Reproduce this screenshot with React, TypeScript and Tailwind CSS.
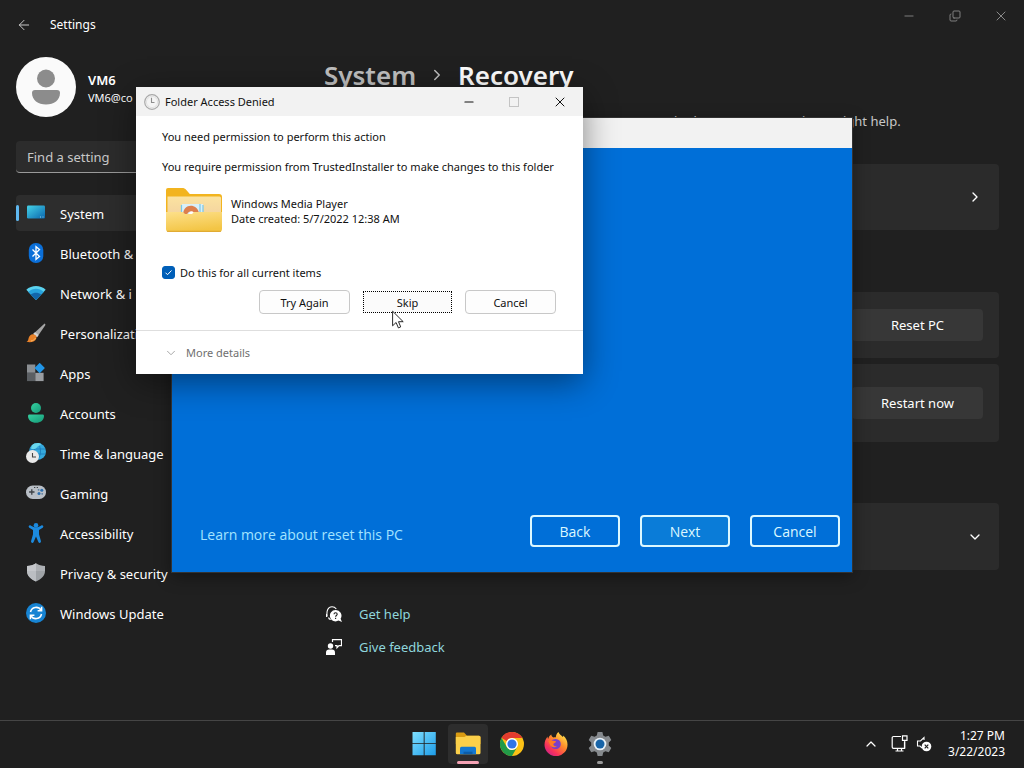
import type { ReactNode } from 'react';
import { ArrowLeft, ChevronDown, ChevronRight, ChevronUp, Copy, Minus, X } from 'lucide-react';

const SystemIcon = () => (
  <svg viewBox="0 0 20 20" className="w-5 h-5">
    <defs>
      <linearGradient id="sys" x1="0" y1="0" x2="1" y2="1">
        <stop offset="0" stopColor="#45d3e8" />
        <stop offset="1" stopColor="#0a66ad" />
      </linearGradient>
    </defs>
    <rect x="1" y="2.500" width="18" height="13" rx="1.200" fill="url(#sys)" />
    <path d="M14 14h1M16.500 14h1" stroke="#bfe9f5" strokeWidth="0.800" />
  </svg>
);

const BluetoothIcon = () => (
  <svg viewBox="0 0 20 20" className="w-5 h-5">
    <rect x="2.800" y="0" width="14.500" height="20" rx="7" fill="#0b6fd8" />
    <path d="M6.500 6.500l7 7L10 16.300V3.700l3.500 2.800-7 7" fill="none" stroke="#fff" strokeWidth="1.300" />
  </svg>
);

const NetworkIcon = () => (
  <svg viewBox="0 0 20 20" className="w-5 h-5">
    <path d="M0.300 6.800C5.500 1.800 14.500 1.800 19.700 6.800L10 17z" fill="#5bd2ee" />
    <path d="M2.300 9C7 4.800 13 4.800 17.700 9L10 17z" fill="#27a3de" />
    <path d="M4.800 11.600C8 9 12 9 15.200 11.600L10 17z" fill="#1266ab" />
  </svg>
);

const BrushIcon = () => (
  <svg viewBox="0 0 20 20" className="w-5 h-5">
    <path d="M18.600 0.600c1 .4.9 1.300.5 2L11 14.200 7.200 11z" fill="#a5a5a5" />
    <path d="M9 9.200l3.600 2.900L11 14.200 7.200 11z" fill="#d3d3d3" />
    <path d="M7 11.200c2.600.2 4 2 3.400 4C9.600 18.600 5 20 0.500 18.800c2-1 1.700-2.300 2.300-4.300.7-2.100 2.300-3.400 4.200-3.300z" fill="#e8822a" />
    <path d="M5 18c2-.4 3.700-1.400 4.600-3" fill="none" stroke="#f9b866" strokeWidth="1" />
  </svg>
);

const AppsIcon = () => (
  <svg viewBox="0 0 20 20" className="w-5 h-5">
    <rect x="1" y="1.500" width="8.300" height="8.300" fill="#8b8f93" />
    <rect x="1" y="9.800" width="8.300" height="8.300" fill="#5b5f63" />
    <rect x="9.300" y="9.800" width="8.300" height="8.300" fill="#9a9da1" />
    <path d="M13.700-.2l5.200 5.200-5.200 5.200L8.500 5z" fill="#2196e8" />
  </svg>
);

const AccountsIcon = () => (
  <svg viewBox="0 0 20 20" className="w-5 h-5">
    <defs>
      <linearGradient id="acc" x1="0" y1="0" x2="1" y2="1">
        <stop offset="0" stopColor="#35d0a0" />
        <stop offset="1" stopColor="#159a78" />
      </linearGradient>
    </defs>
    <circle cx="10" cy="5" r="5" fill="url(#acc)" />
    <path d="M3.500 11.500h13c1 0 1.500.6 1.500 1.500 0 4-3.500 6.800-8 6.800S2 17 2 13c0-.9.5-1.500 1.500-1.500z" fill="url(#acc)" />
  </svg>
);

const TimeIcon = () => (
  <svg viewBox="0 0 20 20" className="w-5 h-5">
    <circle cx="11.500" cy="8.500" r="8.500" fill="#35a9dd" />
    <path d="M4 6h15M4 11h15M11.500 0c-4 4-4 12 0 17M11.500 0c4 4 4 12 0 17" fill="none" stroke="#1674b4" strokeWidth="0.700" />
    <path d="M6 2.200c2-2 7-3 9-1-1 2-3 1-4 3s-4 2-6 1.500z" fill="#6ad8ee" />
    <circle cx="6.500" cy="13.500" r="6.500" fill="#e9e9e9" />
    <path d="M6.500 10v4H10" fill="none" stroke="#444" strokeWidth="1.100" />
  </svg>
);

const GamingIcon = () => (
  <svg viewBox="0 0 20 20" className="w-5 h-5">
    <rect x="0" y="2.500" width="20" height="13.500" rx="6.700" fill="#b9bfc6" />
    <path d="M5.800 6.300v5.400M3.100 9h5.400" stroke="#3c4146" strokeWidth="1.300" />
    <circle cx="15.800" cy="7.200" r="1.500" fill="#2d6fae" />
    <circle cx="13" cy="10.500" r="1.500" fill="#2d6fae" />
    <circle cx="12.600" cy="6.800" r="0.900" fill="#5b7ea0" />
    <circle cx="16.200" cy="10.800" r="0.900" fill="#5b7ea0" />
    <path d="M8 4.500h1.300M10.700 4.500H12" stroke="#3c4146" strokeWidth="1" />
  </svg>
);

const AccessibilityIcon = () => (
  <svg viewBox="0 0 20 20" className="w-5 h-5">
    <circle cx="10" cy="2.300" r="2.300" fill="#1c8be0" />
    <path d="M2.800 3c.4-.7 1.200-.9 1.900-.5 3.400 2.400 7.200 2.400 10.600 0 .7-.4 1.500-.2 1.900.5.3.7.1 1.300-.5 1.700L13 6.900v4.400l1.900 6.800c.4 1.800-1.800 2.500-2.500.9L10 13.500 7.600 19c-.7 1.600-2.900.9-2.500-.9L7 11.300V6.900L3.300 4.700c-.6-.4-.8-1-.5-1.700z" fill="#1c8be0" />
  </svg>
);

const ShieldIcon = () => (
  <svg viewBox="0 0 20 20" className="w-5 h-5">
    <path d="M10 0.300c2.800 1.900 5.500 2.500 9 2.600v5.200c0 4.800-3.400 8-9 10.400-5.600-2.400-9-5.600-9-10.400V2.900c3.500-.1 6.200-.7 9-2.600z" fill="#9fa3a7" />
    <path d="M10 0.300c-2.800 1.900-5.500 2.500-9 2.600v5.200c0 4.800 3.400 8 9 10.400z" fill="#bbbec2" />
    <path d="M10 0.300c2.800 1.900 5.500 2.500 9 2.600v5.200H1V2.900c3.500-.1 6.200-.7 9-2.600z" fill="#fff" opacity="0.150" />
  </svg>
);

const UpdateIcon = () => (
  <svg viewBox="0 0 20 20" className="w-5 h-5">
    <circle cx="10" cy="10" r="10" fill="#1784d3" />
    <path d="M4.500 9A5.700 5.700 0 0 1 15 7.200M15.500 11A5.700 5.700 0 0 1 5 12.800" fill="none" stroke="#fff" strokeWidth="1.500" />
    <path d="M15.600 3.800v4h-4M4.400 16.200v-4h4" fill="none" stroke="#fff" strokeWidth="1.500" />
  </svg>
);

const ClockIcon = () => (
  <svg viewBox="0 0 16 16" className="w-4 h-4">
    <circle cx="8" cy="8" r="7.300" fill="#f4f4f4" stroke="#a8a8a8" strokeWidth="1.200" />
    <circle cx="8" cy="8" r="5.600" fill="none" stroke="#dcdcdc" strokeWidth="0.800" />
    <path d="M7.500 3.800v4.700h3" fill="none" stroke="#8d8d8d" strokeWidth="1.100" />
  </svg>
);

const FolderIcon = () => (
  <svg viewBox="0 0 58 46" className="w-[58px] h-[46px]">
    <defs>
      <linearGradient id="inner" x1="0" y1="0" x2="0" y2="1">
        <stop offset="0" stopColor="#fbe3a0" />
        <stop offset="1" stopColor="#f3d3a0" />
      </linearGradient>
      <linearGradient id="front" x1="0" y1="0" x2="0.300" y2="1">
        <stop offset="0" stopColor="#fde08a" />
        <stop offset="1" stopColor="#f3c545" />
      </linearGradient>
    </defs>
    <path d="M3 1h14c2 0 3 .6 4.300 2l3.500 4H54a3 3 0 0 1 3 3v32H1V3a2 2 0 0 1 2-2z" fill="#f2b41f" />
    <path d="M2.500 9.500h52a1.500 1.500 0 0 1 1.500 1.500v18H2.500z" fill="url(#inner)" />
    <path d="M17 17h21v10H17z" fill="#d9eff8" />
    <path d="M35 17v8M38 18v7M16.500 18v8" stroke="#79c7e8" strokeWidth="1.200" />
    <path d="M18 28c0-12 14-12 16-2l-5 2c-2-5-6-4-7 0z" fill="#dd7f4d" />
    <path d="M24 28c0-5 5-5 6 0z" fill="#fff" />
    <path d="M1 25h17l2 2h7l2-2h28v17a3 3 0 0 1-3 3H4a3 3 0 0 1-3-3z" fill="url(#front)" />
    <path d="M2 44.300h54" stroke="#d9a02b" strokeWidth="0.900" />
  </svg>
);

const HelpIcon = () => (
  <svg viewBox="0 0 16 16" className="w-4 h-4">
    <path d="M1.200 10.500C.2 5 2 .8 6 .8c2 0 3.300.8 4.300 2.200M0.500 8v3M2.500 11.500c.3 1.200 1 1.800 2.300 2" fill="none" stroke="#fff" strokeWidth="1.100" />
    <path d="M9.500 4a5.700 5.700 0 1 0 3 10.600l3.500 1.400-1.400-3.300A5.700 5.700 0 0 0 9.500 4z" fill="#fff" />
    <path d="M8 8.300c0-2 3.200-2 3.200 0 0 1.200-1.600 1.200-1.600 2.500M9.600 11.800v1.100" fill="none" stroke="#202020" strokeWidth="1.100" />
  </svg>
);

const FeedbackIcon = () => (
  <svg viewBox="0 0 16 16" className="w-4 h-4">
    <circle cx="4.500" cy="7" r="2.700" fill="#fff" />
    <path d="M0 16v-2.500c0-2 1.200-3 3-3h3c1.800 0 3 1 3 3V16z" fill="#fff" />
    <path d="M6.500 3V.7h9v6h-2.500l-2 2v-2H9" fill="none" stroke="#fff" strokeWidth="1.200" />
  </svg>
);

const WindowsLogo = () => (
  <svg viewBox="0 0 24 24" className="w-6 h-6">
    <defs>
      <linearGradient id="win" gradientUnits="userSpaceOnUse" x1="0" y1="0" x2="24" y2="24">
        <stop offset="0" stopColor="#7fe0ff" />
        <stop offset="1" stopColor="#1b9be8" />
      </linearGradient>
    </defs>
    <path d="M.5 0h11.200v11.200H.5zM12.600 0h11.200v11.200H12.600zM.5 12.100h11.200v11.200H.5zM12.600 12.100h11.200v11.200H12.600z" fill="url(#win)" />
  </svg>
);

const ExplorerIcon = () => (
  <svg viewBox="0 0 26 24" className="w-[26px] h-6">
    <path d="M2 .5h7l3 3.200h12a1.500 1.500 0 0 1 1.500 1.500V12H.8V1.700A1.200 1.200 0 0 1 2 .5z" fill="#d99b12" />
    <path d="M.8 5h8.500l2.300-1.300h12.400a1.500 1.500 0 0 1 1.500 1.500v15.500a1.500 1.500 0 0 1-1.500 1.500H2.300a1.500 1.500 0 0 1-1.500-1.500z" fill="#fbd04a" />
    <path d="M5 22.200v-6a1.500 1.500 0 0 1 1.500-1.500h13a1.500 1.500 0 0 1 1.500 1.500v6z" fill="#1478d0" />
    <path d="M8.500 22.200v-2.500h9v2.500z" fill="#0c5da8" />
  </svg>
);

const ChromeLogo = () => (
  <svg viewBox="0 0 24 24" className="w-6 h-6">
    <circle cx="12" cy="12" r="12" fill="#fbc116" />
    <path d="M1.600 6A12 12 0 0 1 22.400 6H12a6 6 0 0 0-5.200 3z" fill="#e33b2e" />
    <path d="M1.600 6A12 12 0 0 0 12 24l5.200-9a6 6 0 0 1-10.400 0z" fill="#229a48" />
    <circle cx="12" cy="12" r="6" fill="#fff" />
    <circle cx="12" cy="12" r="4.600" fill="#2f74e8" />
  </svg>
);

const FirefoxLogo = () => (
  <svg viewBox="0 0 24 24" className="w-6 h-6">
    <defs>
      <linearGradient id="fox" x1="0.850" y1="0.100" x2="0.200" y2="0.900">
        <stop offset="0" stopColor="#ffe14a" />
        <stop offset="0.400" stopColor="#ff8a2a" />
        <stop offset="0.800" stopColor="#f9325a" />
        <stop offset="1" stopColor="#d5267f" />
      </linearGradient>
    </defs>
    <path d="M14.500 0c.6 2.300 2.800 3.300 4.300 5 .6-.2.500-1 .4-1.600 3 2.400 4.300 5.600 4.300 9A11.500 11.500 0 0 1 .5 13c0-3.600 1.200-6 3-8.500 0 1.100.2 1.800.8 2.300C4.800 4.800 6 3.300 7.300 2.600c0 1.500.9 2.500 2.200 2.800 2-.1 2-.1 2.300.2C11.800 3.400 12.800 1.200 14.500 0z" fill="url(#fox)" />
    <path d="M7 9.500c2.300-3.500 7.500-3 9.300.2 1.600 4.100-1 7.300-4.500 7.300-3.100 0-5.300-2.200-5.300-4.800z" fill="#7a40c8" />
    <path d="M4.300 9c1.700-1.200 3.500-.6 5-.2 1.500.2 2.700.2 2.700.9 0 1-1.800 1-2.600 2.300-.5 1.500 1.600 2.800 3.600 2-1.300 2-6.500 1.800-7.300-1.900z" fill="#ff7a25" />
  </svg>
);

const SettingsGear = () => (
  <svg viewBox="0 0 24 24" className="w-6 h-6">
    <path
      d="M9.600 0h4.800l.8 3.500 2.200 1.200 3.400-1 2.500 4.200-2.500 2.500v3.200l2.500 2.500-2.500 4.200-3.400-1-2.200 1.200-.8 3.500H9.600l-.8-3.500-2.200-1.200-3.400 1L.7 16.100l2.500-2.500v-3.200L.7 7.900l2.500-4.200 3.400 1 2.200-1.200z"
      fill="#85898d"
    />
    <circle cx="12" cy="12" r="6.300" fill="#e8f1f8" />
    <circle cx="12" cy="12" r="4.500" fill="#1764a8" />
  </svg>
);

const MonitorIcon = () => (
  <svg viewBox="0 0 17 17" className="w-[17px] h-[17px]" fill="none" stroke="#fff" strokeWidth="1.200">
    <path d="M10 1.500H2.500a1.300 1.300 0 0 0-1.300 1.300V12c0 .7.600 1.300 1.300 1.300h11V7M4.500 16h8M6.500 13.500V16M10.500 13.500V16" />
    <path d="M11.500.8h4.500v4.500h-4.500zM13.700 5.500v8" />
  </svg>
);

const MutedIcon = () => (
  <svg viewBox="0 0 16 16" className="w-4 h-4">
    <path d="M8 4V1.500L4.500 5h-3v5H4l2 2" fill="none" stroke="#fff" strokeWidth="1.100" />
    <circle cx="10.500" cy="10.500" r="4.800" fill="#fff" />
    <path d="M8.700 8.700l3.600 3.600M12.300 8.700l-3.600 3.600" stroke="#202020" strokeWidth="1.200" />
  </svg>
);

const navItems = [
  { Icon: SystemIcon, label: 'System' },
  { Icon: BluetoothIcon, label: 'Bluetooth &' },
  { Icon: NetworkIcon, label: 'Network & i' },
  { Icon: BrushIcon, label: 'Personalizati' },
  { Icon: AppsIcon, label: 'Apps' },
  { Icon: AccountsIcon, label: 'Accounts' },
  { Icon: TimeIcon, label: 'Time & language' },
  { Icon: GamingIcon, label: 'Gaming' },
  { Icon: AccessibilityIcon, label: 'Accessibility' },
  { Icon: ShieldIcon, label: 'Privacy & security' },
  { Icon: UpdateIcon, label: 'Windows Update' },
];

const taskbarApps = [
  { Icon: WindowsLogo, name: 'Start' },
  { Icon: ExplorerIcon, name: 'File Explorer', active: true },
  { Icon: ChromeLogo, name: 'Google Chrome' },
  { Icon: FirefoxLogo, name: 'Firefox' },
  { Icon: SettingsGear, name: 'Settings', open: true },
];

const Card = ({ className, children }: { className: string; children: ReactNode }) => (
  <div className={`flex items-center justify-end px-4 rounded bg-[#2b2b2b] ${className}`}>{children}</div>
);

const Sidebar = () => (
  <aside className="w-[292px] shrink-0 pl-4">
    <div className="flex items-center gap-3 pt-2">
      <svg viewBox="0 0 60 60" className="w-[60px] h-[60px]">
        <circle cx="30" cy="30" r="30" fill="#fafafa" />
        <circle cx="30" cy="21.500" r="9" fill="#8c8c8c" />
        <path d="M19 33h22c2 0 3 1.200 3 3 0 7-6 11.500-14 11.500S16 43 16 36c0-1.800 1-3 3-3z" fill="#8c8c8c" />
      </svg>
      <div className="pt-0.5 text-white">
        <div className="text-[13px] leading-5 font-semibold">VM6</div>
        <div className="text-[11px] leading-4">VM6@co</div>
      </div>
    </div>
    <input
      type="text"
      aria-label="Find a setting"
      placeholder="Find a setting"
      className="block w-full h-8 mt-6 px-[11px] rounded bg-[#2c2c2c] border-b border-[#9a9a9a] text-[13px] text-white placeholder:text-[#c8c8c8] outline-none"
    />
    <nav className="flex flex-col gap-1 mt-[22px]">
      {navItems.map(({ Icon, label }, index) => (
        <a
          key={label}
          href="#"
          className={`flex items-center h-9 rounded text-[13px] text-white ${index === 0 ? 'bg-[#2d2d2d]' : ''}`}
        >
          <span className={`w-[3px] h-4 rounded-full ${index === 0 ? 'bg-[#5fb8f0]' : ''}`} />
          <span className="ml-[7px] mr-3.5">
            <Icon />
          </span>
          <span className="pt-[3px]">{label}</span>
        </a>
      ))}
    </nav>
  </aside>
);

const Recovery = () => (
  <main className="flex-1 min-w-0 pl-8 pr-[25px] text-[13px] text-white">
    <h1 className="flex items-center gap-3 mt-2 text-[26px] leading-9 font-semibold">
      <span className="text-[#c0c0c0]">System</span>
      <ChevronRight className="w-[18px] h-[18px] text-[#c0c0c0]" />
      <span>Recovery</span>
    </h1>
    <p className="mt-[18px] pl-2.5 leading-5 text-[#c8c8c8]">
      If you're having problems with your PC or want to reset it, these recovery options might help.
    </p>
    <Card className="h-[66px] mt-[33px]">
      <ChevronRight className="w-4 h-4" />
    </Card>
    <Card className="h-[66px] mt-[62px]">
      <button className="w-[131px] h-8 pt-px rounded bg-[#373737]">Reset PC</button>
    </Card>
    <Card className="h-[78px] mt-1.5">
      <button className="w-[131px] h-8 pt-px rounded bg-[#373737]">Restart now</button>
    </Card>
    <Card className="h-[67px] mt-[61px]">
      <ChevronDown className="w-4 h-4" />
    </Card>
    <div className="flex flex-col gap-[13px] mt-[34px] pl-0.5 text-[#8fd6dc]">
      <a href="#" className="flex items-center gap-[17px] leading-5">
        <HelpIcon />
        Get help
      </a>
      <a href="#" className="flex items-center gap-[17px] leading-5">
        <FeedbackIcon />
        Give feedback
      </a>
    </div>
  </main>
);

const SettingsWindow = () => (
  <div className="flex-1 flex flex-col">
    <header className="flex justify-between h-[49px] text-white">
      <div className="flex items-center gap-[18px] pl-4 text-xs">
        <button aria-label="Back">
          <ArrowLeft className="w-4 h-4 text-[#c8c8c8]" strokeWidth={1.5} />
        </button>
        Settings
      </div>
      <div className="flex h-8 text-[#8a8a8a]">
        <button aria-label="Minimize" className="w-[46px] grid place-items-center">
          <Minus className="w-3.5 h-3.5" strokeWidth={1.5} />
        </button>
        <button aria-label="Restore" className="w-[46px] grid place-items-center">
          <Copy className="w-3 h-3 -scale-y-100" strokeWidth={1.8} />
        </button>
        <button aria-label="Close" className="w-[46px] grid place-items-center">
          <X className="w-4 h-4" strokeWidth={1.5} />
        </button>
      </div>
    </header>
    <div className="flex">
      <Sidebar />
      <Recovery />
    </div>
  </div>
);

const ResetWindow = () => (
  <section
    aria-label="Reset this PC"
    className="absolute left-[172px] top-[118px] w-[680px] h-[454px] flex flex-col bg-[#006fd8] font-['Open_Sans',sans-serif] shadow-[0_0_0_1px_#333333,0_4px_16px_rgba(0,0,0,0.4)]"
  >
    <div className="h-[30px] bg-[#f2f2f2]" />
    <div className="flex-1 flex items-end justify-between pl-7 pr-3 pb-[25px] text-sm">
      <a href="#" className="h-8 pt-2 leading-6 text-[#a4e4ff]">
        Learn more about reset this PC
      </a>
      <div className="flex gap-5 text-[#dcf8ff]">
        <button className="w-[90px] h-8 pt-px rounded border-2 border-[#dcf8ff]">Back</button>
        <button className="w-[90px] h-8 pt-px rounded border-2 border-[#dcf8ff] bg-[#0a7cd8]">Next</button>
        <button className="w-[90px] h-8 pt-px rounded border-2 border-[#dcf8ff]">Cancel</button>
      </div>
    </div>
  </section>
);

const AccessDialog = () => (
  <section
    role="dialog"
    aria-label="Folder Access Denied"
    className="absolute left-[136px] top-[87px] w-[447px] h-[287px] flex flex-col bg-white text-[11px] text-[#111] shadow-[0_8px_32px_rgba(0,0,0,0.45)]"
  >
    <div className="flex items-center h-[29px] pl-2 bg-[#f2f2f2]">
      <ClockIcon />
      <span className="flex-1 ml-[5px] pt-0.5">Folder Access Denied</span>
      <button aria-label="Minimize" className="w-[45px] grid place-items-center">
        <Minus className="w-3.5 h-3.5" strokeWidth={1.8} />
      </button>
      <button aria-label="Maximize" disabled className="w-[46px] grid place-items-center">
        <span className="w-2.5 h-2.5 border border-[#c4c4c4]" />
      </button>
      <button aria-label="Close" className="w-[46px] grid place-items-center">
        <X className="w-4 h-4" strokeWidth={1.5} />
      </button>
    </div>
    <div className="pl-[26px] pr-[27px] pt-[13px] leading-[15px]">
      <p className="mb-[15px]">You need permission to perform this action</p>
      <p className="whitespace-nowrap">You require permission from TrustedInstaller to make changes to this folder</p>
      <div className="flex items-center gap-2 mt-[13px] pl-[3px]">
        <FolderIcon />
        <div className="pt-0.5">
          <p>Windows Media Player</p>
          <p>Date created: 5/7/2022 12:38 AM</p>
        </div>
      </div>
      <label className="flex items-center gap-[5px] mt-8">
        <span className="grid">
          <input
            type="checkbox"
            defaultChecked
            className="col-start-1 row-start-1 appearance-none w-[13px] h-[13px] rounded-[3px] border border-[#005fb8] checked:bg-[#005fb8]"
          />
          <svg viewBox="0 0 13 13" className="col-start-1 row-start-1 w-[13px] h-[13px] pointer-events-none">
            <path d="M3.500 6.700l2 2 4-4.200" fill="none" stroke="#fff" strokeWidth="1" />
          </svg>
        </span>
        Do this for all current items
      </label>
      <div className="flex justify-end items-center gap-[13px] mt-2.5">
        <button className="w-[91px] h-6 rounded border border-[#c8c8c8] bg-[#fdfdfd]">Try Again</button>
        <button className="w-[89px] h-[22px] border border-dotted border-black bg-[#fbfbfb]">Skip</button>
        <button className="w-[91px] h-6 rounded border border-[#c8c8c8] bg-[#fdfdfd]">Cancel</button>
      </div>
    </div>
    <div className="flex-1 flex items-center mt-4 pl-7 border-t border-[#dedede]">
      <button className="flex items-center gap-2 pt-px text-[#6f6f6f]">
        <ChevronDown className="w-3.5 h-3.5 text-[#9a9a9a]" strokeWidth={1.5} />
        More details
      </button>
    </div>
  </section>
);

const Cursor = () => (
  <svg viewBox="0 0 12 19" className="absolute left-[392px] top-[310px] w-3 h-[19px]">
    <path d="M.6 1.200v14.600l3.500-3.300 2.300 5.400 2.300-1-2.200-5.200h4.700z" fill="#fff" stroke="#111" strokeWidth="0.900" />
  </svg>
);

const Taskbar = () => (
  <footer className="grid grid-cols-[1fr_auto_1fr] items-center h-12 pb-0.5 border-t border-[#454545] bg-[#1f1f1f] text-white">
    <div />
    <div className="flex gap-1">
      {taskbarApps.map(({ Icon, name, active, open }) => (
        <button
          key={name}
          aria-label={name}
          className={`relative w-10 h-10 grid place-items-center rounded ${active ? 'bg-[#2d2d2d]' : ''}`}
        >
          <Icon />
          {active && <span className="absolute bottom-0 w-[22px] h-[3px] rounded-full bg-[#f5a3b5]" />}
          {open && <span className="absolute bottom-0 w-1.5 h-[3px] rounded-full bg-[#9a9a9a]" />}
        </button>
      ))}
    </div>
    <div className="flex items-center justify-end pr-[19px]">
      <ChevronUp className="w-4 h-4 mr-3" strokeWidth={1.8} />
      <MonitorIcon />
      <span className="ml-2 mr-4">
        <MutedIcon />
      </span>
      <div className="text-right text-xs leading-4">
        <div>1:27 PM</div>
        <div>3/22/2023</div>
      </div>
    </div>
  </footer>
);

const App = () => (
  <div className="relative min-h-screen flex flex-col overflow-hidden bg-[#202020] font-['Noto_Sans','Open_Sans',sans-serif]">
    <SettingsWindow />
    <Taskbar />
    <ResetWindow />
    <AccessDialog />
    <Cursor />
  </div>
);

export default App;
